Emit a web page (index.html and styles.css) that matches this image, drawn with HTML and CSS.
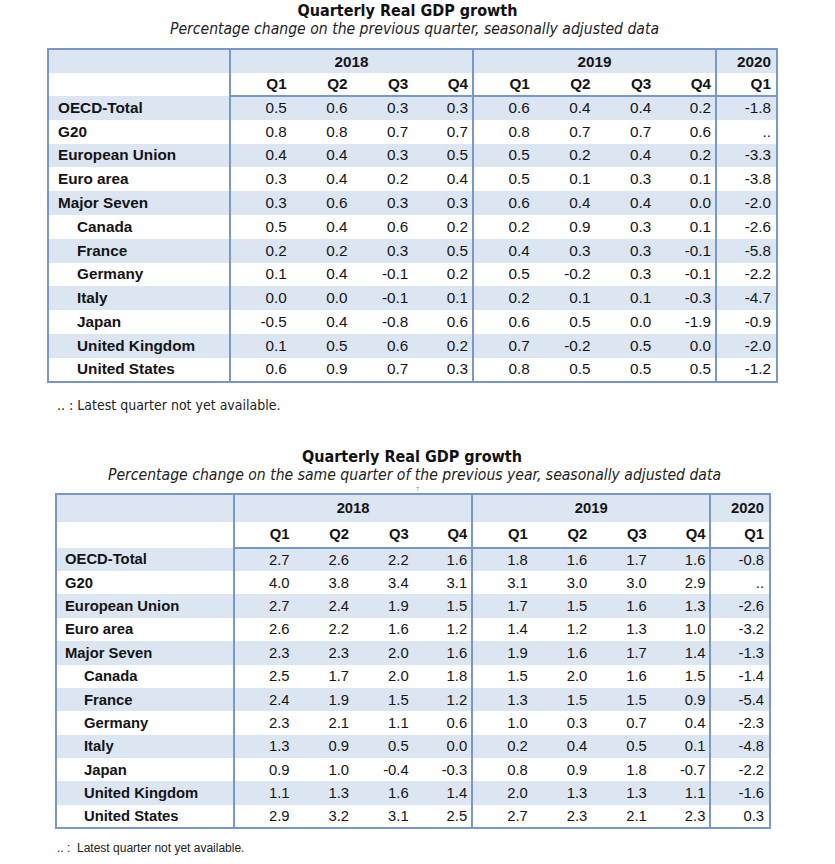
FILE: index.html
```html
<!DOCTYPE html>
<html>
<head>
<meta charset="utf-8">
<link rel="stylesheet" href="styles.css">
</head>
<body>
<section class="block block-1">
  <div class="title">Quarterly Real GDP growth</div>
  <div class="subtitle">Percentage change on the previous quarter, seasonally adjusted data</div>
  <table class="gdp gdp-1">
    <colgroup>
      <col class="c-label"><col><col><col><col class="c-end"><col><col><col><col class="c-end"><col class="c-last">
    </colgroup>
    <thead>
      <tr class="yr">
        <th class="lab"></th>
        <th colspan="4" class="grp">2018</th>
        <th colspan="4" class="grp">2019</th>
        <th class="grp r">2020</th>
      </tr>
      <tr class="q">
        <th class="lab"></th>
        <th>Q1</th><th>Q2</th><th>Q3</th><th class="end">Q4</th>
        <th>Q1</th><th>Q2</th><th>Q3</th><th class="end">Q4</th>
        <th>Q1</th>
      </tr>
    </thead>
    <tbody>
      <tr class="s"><td class="lab">OECD-Total</td><td>0.5</td><td>0.6</td><td>0.3</td><td class="end">0.3</td><td>0.6</td><td>0.4</td><td>0.4</td><td class="end">0.2</td><td>-1.8</td></tr>
      <tr><td class="lab">G20</td><td>0.8</td><td>0.8</td><td>0.7</td><td class="end">0.7</td><td>0.8</td><td>0.7</td><td>0.7</td><td class="end">0.6</td><td>..</td></tr>
      <tr class="s"><td class="lab">European Union</td><td>0.4</td><td>0.4</td><td>0.3</td><td class="end">0.5</td><td>0.5</td><td>0.2</td><td>0.4</td><td class="end">0.2</td><td>-3.3</td></tr>
      <tr><td class="lab">Euro area</td><td>0.3</td><td>0.4</td><td>0.2</td><td class="end">0.4</td><td>0.5</td><td>0.1</td><td>0.3</td><td class="end">0.1</td><td>-3.8</td></tr>
      <tr class="s"><td class="lab">Major Seven</td><td>0.3</td><td>0.6</td><td>0.3</td><td class="end">0.3</td><td>0.6</td><td>0.4</td><td>0.4</td><td class="end">0.0</td><td>-2.0</td></tr>
      <tr><td class="lab ind">Canada</td><td>0.5</td><td>0.4</td><td>0.6</td><td class="end">0.2</td><td>0.2</td><td>0.9</td><td>0.3</td><td class="end">0.1</td><td>-2.6</td></tr>
      <tr class="s"><td class="lab ind">France</td><td>0.2</td><td>0.2</td><td>0.3</td><td class="end">0.5</td><td>0.4</td><td>0.3</td><td>0.3</td><td class="end">-0.1</td><td>-5.8</td></tr>
      <tr><td class="lab ind">Germany</td><td>0.1</td><td>0.4</td><td>-0.1</td><td class="end">0.2</td><td>0.5</td><td>-0.2</td><td>0.3</td><td class="end">-0.1</td><td>-2.2</td></tr>
      <tr class="s"><td class="lab ind">Italy</td><td>0.0</td><td>0.0</td><td>-0.1</td><td class="end">0.1</td><td>0.2</td><td>0.1</td><td>0.1</td><td class="end">-0.3</td><td>-4.7</td></tr>
      <tr><td class="lab ind">Japan</td><td>-0.5</td><td>0.4</td><td>-0.8</td><td class="end">0.6</td><td>0.6</td><td>0.5</td><td>0.0</td><td class="end">-1.9</td><td>-0.9</td></tr>
      <tr class="s"><td class="lab ind">United Kingdom</td><td>0.1</td><td>0.5</td><td>0.6</td><td class="end">0.2</td><td>0.7</td><td>-0.2</td><td>0.5</td><td class="end">0.0</td><td>-2.0</td></tr>
      <tr><td class="lab ind">United States</td><td>0.6</td><td>0.9</td><td>0.7</td><td class="end">0.3</td><td>0.8</td><td>0.5</td><td>0.5</td><td class="end">0.5</td><td>-1.2</td></tr>
    </tbody>
  </table>
  <p class="note note-1">.. : Latest quarter not yet available.</p>
</section>

<section class="block block-2">
  <div class="title">Quarterly Real GDP growth</div>
  <div class="subtitle">Percentage change on the same quarter of the previous year, seasonally adjusted data</div>
  <div class="mark">7</div>
  <table class="gdp gdp-2">
    <colgroup>
      <col class="c-label"><col><col><col><col class="c-end"><col><col><col><col class="c-end"><col class="c-last">
    </colgroup>
    <thead>
      <tr class="yr">
        <th class="lab"></th>
        <th colspan="4" class="grp">2018</th>
        <th colspan="4" class="grp">2019</th>
        <th class="grp r">2020</th>
      </tr>
      <tr class="q">
        <th class="lab"></th>
        <th>Q1</th><th>Q2</th><th>Q3</th><th class="end">Q4</th>
        <th>Q1</th><th>Q2</th><th>Q3</th><th class="end">Q4</th>
        <th>Q1</th>
      </tr>
    </thead>
    <tbody>
      <tr class="s"><td class="lab">OECD-Total</td><td>2.7</td><td>2.6</td><td>2.2</td><td class="end">1.6</td><td>1.8</td><td>1.6</td><td>1.7</td><td class="end">1.6</td><td>-0.8</td></tr>
      <tr><td class="lab">G20</td><td>4.0</td><td>3.8</td><td>3.4</td><td class="end">3.1</td><td>3.1</td><td>3.0</td><td>3.0</td><td class="end">2.9</td><td>..</td></tr>
      <tr class="s"><td class="lab">European Union</td><td>2.7</td><td>2.4</td><td>1.9</td><td class="end">1.5</td><td>1.7</td><td>1.5</td><td>1.6</td><td class="end">1.3</td><td>-2.6</td></tr>
      <tr><td class="lab">Euro area</td><td>2.6</td><td>2.2</td><td>1.6</td><td class="end">1.2</td><td>1.4</td><td>1.2</td><td>1.3</td><td class="end">1.0</td><td>-3.2</td></tr>
      <tr class="s"><td class="lab">Major Seven</td><td>2.3</td><td>2.3</td><td>2.0</td><td class="end">1.6</td><td>1.9</td><td>1.6</td><td>1.7</td><td class="end">1.4</td><td>-1.3</td></tr>
      <tr><td class="lab ind">Canada</td><td>2.5</td><td>1.7</td><td>2.0</td><td class="end">1.8</td><td>1.5</td><td>2.0</td><td>1.6</td><td class="end">1.5</td><td>-1.4</td></tr>
      <tr class="s"><td class="lab ind">France</td><td>2.4</td><td>1.9</td><td>1.5</td><td class="end">1.2</td><td>1.3</td><td>1.5</td><td>1.5</td><td class="end">0.9</td><td>-5.4</td></tr>
      <tr><td class="lab ind">Germany</td><td>2.3</td><td>2.1</td><td>1.1</td><td class="end">0.6</td><td>1.0</td><td>0.3</td><td>0.7</td><td class="end">0.4</td><td>-2.3</td></tr>
      <tr class="s"><td class="lab ind">Italy</td><td>1.3</td><td>0.9</td><td>0.5</td><td class="end">0.0</td><td>0.2</td><td>0.4</td><td>0.5</td><td class="end">0.1</td><td>-4.8</td></tr>
      <tr><td class="lab ind">Japan</td><td>0.9</td><td>1.0</td><td>-0.4</td><td class="end">-0.3</td><td>0.8</td><td>0.9</td><td>1.8</td><td class="end">-0.7</td><td>-2.2</td></tr>
      <tr class="s"><td class="lab ind">United Kingdom</td><td>1.1</td><td>1.3</td><td>1.6</td><td class="end">1.4</td><td>2.0</td><td>1.3</td><td>1.3</td><td class="end">1.1</td><td>-1.6</td></tr>
      <tr><td class="lab ind">United States</td><td>2.9</td><td>3.2</td><td>3.1</td><td class="end">2.5</td><td>2.7</td><td>2.3</td><td>2.1</td><td class="end">2.3</td><td>0.3</td></tr>
    </tbody>
  </table>
  <p class="note note-2">.. :&nbsp; Latest quarter not yet available.</p>
</section>
</body>
</html>
```
FILE: styles.css
```css
html, body {
  margin: 0;
  padding: 0;
  background: #ffffff;
}
body {
  width: 835px;
  height: 864px;
  overflow: hidden;
  color: #141414;
  font-family: "Liberation Sans", Arial, sans-serif;
}
.block {
  display: flex;
  flex-direction: column;
}
.title {
  font-family: "DejaVu Sans Condensed", "DejaVu Sans", sans-serif;
  font-weight: bold;
  font-size: 16px;
  line-height: 19px;
  text-align: center;
  color: #111;
}
.subtitle {
  font-family: "DejaVu Sans Condensed", "DejaVu Sans", sans-serif;
  font-style: italic;
  font-size: 15.6px;
  line-height: 19px;
  text-align: center;
  color: #222;
}
.block-1 { padding-top: 1px; }
.block-1 .title { padding-right: 20px; }
.block-1 .subtitle { margin-bottom: 9px; padding-right: 6px; }

.block-2 { margin-top: 34px; }
.block-2 .title { padding-right: 11px; }
.block-2 .subtitle { padding-right: 6px; }
.mark {
  font-size: 6px;
  line-height: 8px;
  height: 8px;
  text-align: center;
  color: #888;
}

.gdp {
  border-collapse: collapse;
  table-layout: fixed;
  border: 2px solid #7698cc;
  font-family: "Liberation Sans", Arial, sans-serif;
}
.gdp-1 {
  margin-left: 47px;
  width: 731px;
}
.gdp-2 {
  margin-left: 55px;
  width: 716px;
}
.gdp-1 .c-label { width: 182px; }
.gdp-2 .c-label { width: 178px; }

.gdp th, .gdp td {
  padding: 0 4px 0 0;
  text-align: right;
  white-space: nowrap;
  overflow: hidden;
}
.gdp th {
  font-weight: bold;
}
.gdp td {
  font-weight: normal;
}
.gdp .lab {
  text-align: left;
  font-weight: bold;
  padding-left: 9px;
  border-right: 2px solid #7698cc;
}
.gdp .lab.ind {
  padding-left: 28px;
}
.gdp .end {
  border-right: 2px solid #7698cc;
}
.gdp .grp {
  text-align: center;
  border-right: 2px solid #7698cc;
  padding: 0;
}
.gdp .grp.r {
  text-align: right;
  padding-right: 5px;
}
.gdp tr.yr th {
  background: #dce6f2;
}
.gdp tr.q th {
  background: #ffffff;
  border-bottom: 2px solid #7698cc;
}
.gdp tr.q th.lab {
  border-bottom: none;
}
.gdp tr.s td {
  background: #dce6f2;
}
.gdp td:last-child, .gdp th:last-child {
  padding-right: 5px;
}

.gdp-1 th, .gdp-1 td { font-size: 15.3px; }
.gdp-1 tr.yr { height: 24px; }
.gdp-1 tr.q { height: 23px; }
.gdp-1 tbody tr { height: 23.8px; }

.gdp-2 th, .gdp-2 td { font-size: 14.8px; }
.gdp-2 tr.yr { height: 28px; }
.gdp-2 tr.q { height: 26px; }
.gdp-2 tbody tr { height: 23.4px; }
.gdp-2 .lab { padding-left: 8px; }
.gdp-2 .lab.ind { padding-left: 27px; }

.note {
  margin: 0;
}
.note-1 {
  font-family: "DejaVu Sans Condensed", "DejaVu Sans", sans-serif;
  font-size: 14px;
  line-height: 16px;
  margin-top: 14px;
  margin-left: 57px;
  color: #222;
}
.note-2 {
  font-family: "Liberation Sans", Arial, sans-serif;
  font-size: 12px;
  line-height: 16px;
  margin-top: 11px;
  margin-left: 57px;
  color: #222;
}
```
